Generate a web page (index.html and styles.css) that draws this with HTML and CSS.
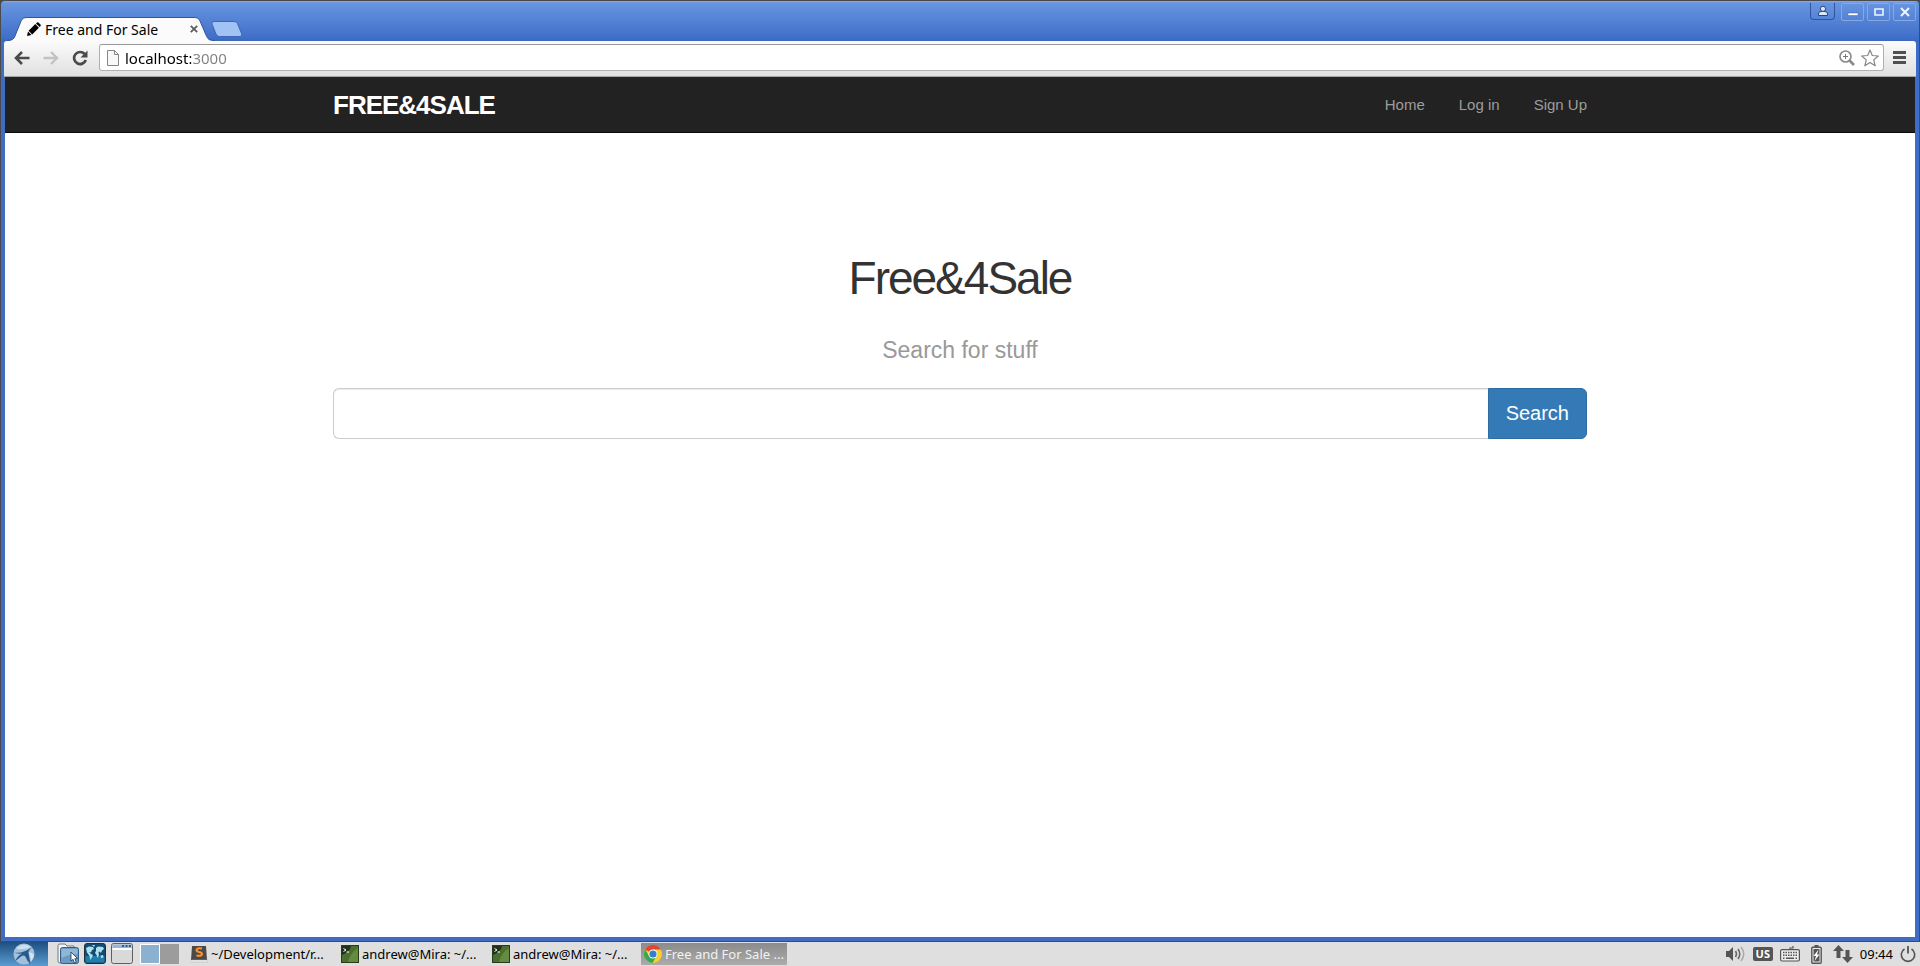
FILE: index.html
```html
<!DOCTYPE html>
<html lang="en">
<head>
  <meta charset="UTF-8">
  <meta name="viewport" content="width=device-width, initial-scale=1.0">
  <title>Free and For Sale</title>
  <link rel="stylesheet" href="styles.css">
</head>
<body>

  <div class="window">
    <div class="titlebar">
      <div class="tab">
        <svg class="tab-shape" viewBox="0 0 208 24" width="208" height="24">
          <path d="M0 24 C5 23.500 7 22 8 19 L14 4 C15 1.500 17 .5 20 .5 H187 C190 .5 192 1.500 193 4 L199 18 C201 22.500 202 23.500 208 23.500 V24Z" fill="#fbfbfb"/>
          <path d="M0 23.500 C5 23.500 7 22 8 19 L14 4 C15 1.500 17 .5 20 .5 H187 C190 .5 192 1.500 193 4 L199 18 C201 22.500 202 23.500 208 23.500" fill="none" stroke="#31569f"/>
        </svg>
        <svg class="favicon" viewBox="0 0 14 14" width="14" height="14"><path d="M0 14 L1 9.500 L4.500 13Z M1.600 8.800 L8.300 2.100 L11.900 5.700 L5.200 12.400Z M9 1.400 L10 .4 Q10.700 0 11.400 .5 L13.500 2.600 Q14 3.300 13.600 4 L12.600 5Z"/></svg>
        <span class="tab-title">Free and For Sale</span>
        <button class="tab-close" aria-label="Close tab"><svg viewBox="0 0 8 8" width="8" height="8"><path d="M.8 .8 L7.200 7.200 M7.200 .8 L.8 7.200" stroke="#5c5c5c" stroke-width="1.800"/></svg></button>
      </div>
      <button class="new-tab" aria-label="New tab"><svg viewBox="0 0 32 16" width="32" height="16"><path d="M3 .5 H23 Q25.500 .5 26.500 2.500 L30.500 12.500 Q31.500 15.500 29 15.500 H8.500 Q6 15.500 5 13 L1 3 Q0 .5 3 .5Z" fill="#a0c3f4" stroke="#3e66b4"/></svg></button>
      <div class="window-buttons">
        <button class="profile" aria-label="Profile"><svg viewBox="0 0 12 12" width="12" height="12"><path d="M1.500 10.500 V9 Q1.500 6.500 4 6.500 H8 Q10.500 6.500 10.500 9 V10.500Z" fill="#dce8fa" stroke="#27457f"/><circle cx="6" cy="3.800" r="2.600" fill="#dce8fa" stroke="#27457f"/></svg></button>
        <button aria-label="Minimize"><svg viewBox="0 0 12 10" width="12" height="10"><path d="M1 6 H11 V8.500 H1Z" fill="#fff" stroke="#3a62ad" stroke-width=".5"/></svg></button>
        <button aria-label="Maximize"><svg viewBox="0 0 12 10" width="12" height="10"><path d="M2 2 H10 V8 H2Z" fill="none" stroke="#eef4ff" stroke-width="1.600"/></svg></button>
        <button aria-label="Close"><svg viewBox="0 0 12 10" width="12" height="10"><path d="M2 1 L10 9 M10 1 L2 9" stroke="#eef4ff" stroke-width="2"/></svg></button>
      </div>
    </div>

    <div class="toolbar">
      <button class="tool" aria-label="Back"><svg viewBox="0 0 16 14" width="16" height="14"><path d="M8 1 L2 7 L8 13 M2 7 H15.500" fill="none" stroke="#4a4a4a" stroke-width="2.600"/></svg></button>
      <button class="tool" aria-label="Forward"><svg viewBox="0 0 16 14" width="16" height="14"><path d="M8 1 L14 7 L8 13 M14 7 H.5" fill="none" stroke="#c2c2c2" stroke-width="2.400"/></svg></button>
      <button class="tool" aria-label="Reload"><svg viewBox="0 0 16 16" width="16" height="16"><path d="M12.600 4 A6 6 0 1 0 13.800 10" fill="none" stroke="#4a4a4a" stroke-width="2.700"/><path d="M15.500 .5 V7.500 H8.500Z" fill="#4a4a4a"/></svg></button>
      <div class="omnibox">
        <svg viewBox="0 0 12 16" width="12" height="16"><path d="M.5 .5 H7.500 L11.500 4.500 V15.500 H.5Z M7.500 .5 V4.500 H11.500" fill="#f8f8f8" stroke="#868686"/></svg>
        <input type="text" class="address" value="localhost:3000" aria-label="Address">
        <button aria-label="Zoom"><svg viewBox="0 0 16 16" width="16" height="16"><circle cx="6.500" cy="6.500" r="5.500" fill="none" stroke="#8a8a8a" stroke-width="1.600"/><path d="M10.500 10.500 L15 15" stroke="#8a8a8a" stroke-width="2.600"/><path d="M4 6.500 H9 M6.500 4 V9" stroke="#777"/></svg></button>
        <button aria-label="Bookmark this page"><svg viewBox="0 0 18 18" width="18" height="18"><path d="M9 1 L11.300 6.500 L17.300 7 L12.700 10.900 L14.200 16.800 L9 13.600 L3.800 16.800 L5.300 10.900 L.7 7 L6.700 6.500Z" fill="#fff" stroke="#858585" stroke-width="1.200" stroke-linejoin="round"/></svg></button>
      </div>
      <button class="menu" aria-label="Menu"><svg viewBox="0 0 13 13" width="13" height="13"><path d="M0 1.500 H13 M0 6.500 H13 M0 11.500 H13" stroke="#505050" stroke-width="2.800"/></svg></button>
    </div>

    <div class="page">
      <header class="navbar">
        <div class="container">
          <a href="#" class="logo">FREE&amp;4SALE</a>
          <nav>
            <a href="#">Home</a>
            <a href="#">Log in</a>
            <a href="#">Sign Up</a>
          </nav>
        </div>
      </header>
      <main class="container center">
        <h1>Free&amp;4Sale</h1>
        <h2><label for="search">Search for stuff</label></h2>
        <form class="search">
          <input type="text" id="search">
          <button type="submit">Search</button>
        </form>
      </main>
    </div>
  </div>

  <div class="taskbar">
    <button class="start" aria-label="Menu"><svg viewBox="0 0 22 22" width="22" height="22"><circle cx="11" cy="11" r="10.500" fill="#a3bfd9"/><path d="M3.500 5 Q10 -1 18 4 Q12 7 4 6Z" fill="#cfdfec"/><path d="M1 9.500 Q10 11 19 4 Q15 8 15.500 10 L17.500 21 Q14 18 12 13 Q10 12 8 13.500 L2.500 18 Q4 13 9 10.500 Q4 11 1 9.500Z" fill="#235b8f"/><path d="M16 9 Q20 10 21 12 Q20 16 18 18Z" fill="#d6e4f0"/></svg></button>
    <div class="launchers">
      <button aria-label="File manager"><svg viewBox="0 0 22 22" width="22" height="22"><path d="M1 2.500 Q1 1 3 1 H8 L10 3 H17 V20 H3 Q1 20 1 18Z" fill="#f4f4f4" stroke="#777"/><rect x="3.500" y="4.500" width="18" height="16" rx="2" fill="#689cc8" stroke="#345f87"/><path d="M4.500 6 H20.500 V11 Q12 11 4.500 15Z" fill="#8fb7d8"/><path d="M14 9 V18 L16 16.300 L17.500 20 L19.300 19.200 L17.800 15.800 L20.500 15.500Z" fill="#fff" stroke="#333" stroke-width=".8"/></svg></button>
      <button aria-label="Web browser"><svg viewBox="0 0 22 22" width="22" height="22"><rect x=".5" y=".5" width="21" height="20" rx="2.500" fill="#164a70" stroke="#1e3140"/><path d="M1.500 13 H20.500 V19.500 H1.500Z" fill="#217da9"/><path d="M2 5 L5 3.500 L9 4 L10 6 L8 7 L7 9.500 L5 9 L7 11 L9 12 L8 14 L6.500 17 L5.500 13 L3 9.500Z M8 2 L11 2 L10 4Z M12 5 L14 3.500 L19 4 L20 6 L18 7.500 L17 10 L15.500 8.500 L14.500 9 L15 12 L13.500 15 L12.500 12 L11 10 L12 8Z M16.500 12.500 L19 12 L19.500 14.500 L17 15Z" fill="#ace2ee"/></svg></button>
      <button aria-label="Show desktop"><svg viewBox="0 0 22 22" width="22" height="22"><rect x=".5" y=".5" width="21" height="20" rx="2" fill="#d9d9d9" stroke="#606060"/><path d="M1.500 1.500 H20.500 V5 H1.500Z" fill="#9bb7d0"/><path d="M11 3 H13 M14.500 3 H16.500 M18 3 H20" stroke="#245d91" stroke-width="2"/><path d="M1.500 6 H20.500" stroke="#fff" stroke-width="2"/></svg></button>
    </div>
    <div class="pager">
      <button class="current" aria-label="Desktop 1"></button>
      <button aria-label="Desktop 2"></button>
    </div>
    <div class="tasks">
      <button><svg viewBox="0 0 18 18" width="18" height="18"><path d="M1 15 L2 1 H16 L17 15Z" fill="#4a4a4a"/><path d="M0 15 H18 V17 H0Z" fill="#f4f4f4" stroke="#aaa" stroke-width=".5"/><path d="M12 3.500 Q7 2.500 6.500 5 Q6.500 6.500 9 7 Q12 7.500 12 9 Q11.500 11.500 6.500 10.500" fill="none" stroke="#ff922b" stroke-width="2"/></svg><span>~/Development/r...</span></button>
      <button><svg viewBox="0 0 18 18" width="18" height="18"><use href="#terminal"/></svg><span>andrew@Mira: ~/...</span></button>
      <button><svg viewBox="0 0 18 18" width="18" height="18"><use href="#terminal"/></svg><span>andrew@Mira: ~/...</span></button>
      <button class="active"><svg viewBox="0 0 18 18" width="18" height="18"><circle cx="9" cy="9" r="9" fill="#f7ce2e"/><path d="M9 9 L1.200 4.500 A9 9 0 0 1 16.800 4.500 H9Z" fill="#df4636"/><path d="M1.200 4.500 A9 9 0 0 0 8.500 18 L12.500 11 L5 11Z" fill="#35a853"/><circle cx="9" cy="9" r="4.500" fill="#fff"/><circle cx="9" cy="9" r="3.600" fill="#347ecb"/></svg><span>Free and For Sale ...</span></button>
    </div>
    <div class="tray">
      <svg viewBox="0 0 20 18" width="20" height="18"><path d="M0 6 H3 L7 2 V16 L3 12 H0Z" fill="#555"/><path d="M9.500 6 Q11.500 9 9.500 12 M12 4 Q15.500 9 12 14" fill="none" stroke="#666" stroke-width="1.500"/><path d="M15 2 Q20.500 9 15 16" fill="none" stroke="#aaa" stroke-width="1.500"/></svg>
      <span class="lang">US</span>
      <svg viewBox="0 0 20 16" width="20" height="16"><path d="M10 3.500 V2 H13 V0" fill="none" stroke="#555" stroke-width="1.200"/><rect x=".6" y="3.600" width="18.800" height="11.400" rx="1.500" fill="#eee" stroke="#555" stroke-width="1.200"/><path d="M3 6.500 H17.500 M3 9.200 H17.500" stroke="#555" stroke-width="1.600" stroke-dasharray="1.500 1"/><path d="M3 12.300 H4.500 M6 12.300 H14 M15.500 12.300 H17" stroke="#555" stroke-width="1.400"/></svg>
      <svg class="battery" viewBox="0 0 11 19" width="11" height="19"><path d="M3.500 0 H7.500 V3 H3.500Z" fill="#555"/><rect x=".8" y="2.300" width="9.400" height="16" rx="1" fill="#eee" stroke="#555" stroke-width="1.400"/><path d="M2.500 4 H8.500 V16.500 H2.500Z" fill="#555"/><path d="M7.500 4.500 L2.500 11 H5 L3.500 16 L8.500 9.500 H6Z" fill="#fff"/></svg>
      <svg viewBox="0 0 20 18" width="20" height="18"><path d="M5.500 0 L11 6 H7.500 V13 H3.500 V6 H0Z M14.500 18 L9 12 H12.500 V5 H16.500 V12 H20Z" fill="#555"/></svg>
      <span class="clock">09:44</span>
      <button aria-label="Log out"><svg viewBox="0 0 16 18" width="16" height="18"><path d="M4.500 4 A6.700 6.700 0 1 0 11.500 4" fill="none" stroke="#555" stroke-width="1.600"/><path d="M8 1 V8.500" stroke="#555" stroke-width="1.800"/></svg></button>
    </div>
  </div>

  <svg class="symbols" aria-hidden="true">
    <symbol id="terminal" viewBox="0 0 18 18"><rect x=".5" y=".5" width="17" height="17" fill="#4a6e2e" stroke="#293b1c"/><path d="M1 1 H10 Q9 7 1 10Z" fill="#20301a"/><path d="M7 17 Q9 8 17 3 V17Z" fill="#648b3f"/><path d="M2.500 3.500 L5 5 L2.500 6.500 M5.500 7 H8" stroke="#fff" fill="none"/></symbol>
  </svg>

</body>
</html>
```
FILE: styles.css
```css
* {
  box-sizing: border-box;
}

body {
  margin: 0;
  height: 100vh;
  display: flex;
  flex-direction: column;
  font-family: "Noto Sans", sans-serif;
  font-size: 14px;
  background-color: #4a4a4a;
  overflow: hidden;
}

svg {
  display: block;
  flex: none;
}

button {
  padding: 0;
  border: 0;
  background: none;
  font-family: inherit;
  cursor: pointer;
}

.symbols {
  position: absolute;
  width: 0;
  height: 0;
}

/* browser window */
.window {
  flex: 1;
  min-height: 0;
  display: flex;
  flex-direction: column;
  margin: 1px 1px;
  padding: 0 3px 4px;
  border-radius: 4px 4px 0 0;
  background-color: #3f6dc5;
}

.titlebar {
  height: 40px;
  display: flex;
  align-items: flex-end;
  margin: 0 -3px;
  padding-left: 6px;
  border-radius: 4px 4px 0 0;
  background: linear-gradient(#87acea 0, #6795e0 2px, #4170ca 36px, #3c69bd);
}

.tab {
  position: relative;
  width: 208px;
  height: 24px;
  display: flex;
  align-items: center;
  padding: 0 17px 0 20px;
}

.tab-shape {
  position: absolute;
  left: 0;
  top: 0;
}

.favicon,
.tab-title,
.tab-close {
  position: relative;
}

.tab-title {
  flex: 1;
  margin-left: 4px;
  white-space: nowrap;
}

.new-tab {
  align-self: flex-end;
  margin: 0 0 4px -4px;
}

.window-buttons {
  align-self: flex-start;
  display: flex;
  gap: 3px;
  margin: 2px 3px 0 auto;
}

.window-buttons button {
  width: 23px;
  height: 18px;
  display: flex;
  align-items: center;
  justify-content: center;
  border: 1px solid #86a9e6;
  border-radius: 2px;
}

.window-buttons .profile {
  width: 25px;
  height: 17px;
  margin-right: 3px;
  border-color: #2f549b;
  border-top: 0;
  border-radius: 0 0 4px 4px;
}

.toolbar {
  height: 36px;
  display: flex;
  align-items: center;
  padding: 0 8px 2px 10px;
  border-bottom: 1px solid #a5a5a5;
  border-radius: 3px 3px 0 0;
  background: linear-gradient(#fbfbfb, #e0e0e0);
}

.tool {
  width: 16px;
  margin-right: 13px;
}

.tool:nth-child(3) {
  margin-right: 11px;
}

.omnibox {
  flex: 1;
  height: 27px;
  display: flex;
  align-items: center;
  gap: 6px;
  padding: 0 4px 0 7px;
  border: 1px solid #b0b0b0;
  border-top-color: #999;
  border-radius: 3px;
  background-color: #fff;
}

/* host in black, port in grey */
.address {
  flex: 1;
  min-width: 0;
  padding: 0;
  border: 0;
  outline: 0;
  font-family: inherit;
  font-size: 15px;
  color: transparent;
  background: linear-gradient(to right, #000 66px, #808080 66px);
  -webkit-background-clip: text;
  background-clip: text;
}

.menu {
  margin-left: 9px;
  padding-right: 2px;
}

/* web page */
.page {
  flex: 1;
  min-height: 0;
  margin: 0 1px;
  background-color: #fff;
  font-family: "Liberation Sans", Arial, sans-serif;
}

.container {
  max-width: 1254px;
  margin: 0 auto;
}

.navbar {
  background-color: #222;
  border-bottom: 1px solid #080808;
}

.navbar .container {
  height: 55px;
  display: flex;
  align-items: center;
  justify-content: space-between;
}

.logo {
  padding-top: 2px;
  color: #fff;
  font-size: 26px;
  font-weight: bold;
  letter-spacing: -1px;
  text-decoration: none;
}

nav {
  display: flex;
  gap: 34px;
}

nav a {
  color: #9d9d9d;
  font-size: 15px;
  text-decoration: none;
}

.center {
  padding-top: 120px;
  text-align: center;
}

h1 {
  margin: 0 0 33px;
  color: #333;
  font-size: 46px;
  font-weight: normal;
  line-height: 50px;
  letter-spacing: -2px;
}

h2 {
  margin: 0 0 24px;
  color: #999;
  font-size: 23px;
  font-weight: normal;
  line-height: 28px;
}

.search {
  display: flex;
}

.search input {
  flex: 1;
  min-width: 0;
  height: 51px;
  padding: 11px 18px;
  border: 1px solid #ccc;
  border-right: 0;
  border-radius: 6px 0 0 6px;
  box-shadow: inset 0 1px 1px rgba(0, 0, 0, 0.08);
  font-family: inherit;
  font-size: 20px;
}

.search button {
  padding: 0 17px;
  border: 1px solid #2e6da4;
  border-radius: 0 6px 6px 0;
  background-color: #337ab7;
  color: #fff;
  font-size: 20px;
}

/* desktop panel */
.taskbar {
  height: 24px;
  display: flex;
  align-items: center;
  background-color: #dfdfdf;
  font-size: 13px;
  overflow: hidden;
}

.start {
  width: 48px;
  height: 24px;
  display: flex;
  align-items: center;
  justify-content: center;
  background: linear-gradient(#1d4f80, #5b9bd0);
}

.launchers {
  display: flex;
  gap: 5px;
  margin-left: 9px;
}

.pager {
  display: flex;
  margin-left: 7px;
}

.pager button {
  width: 19px;
  height: 20px;
  background-color: #9c9c9c;
}

.pager .current {
  width: 20px;
  border: 1px solid #fff;
  background-color: #8cb0d0;
}

.tasks {
  display: flex;
  gap: 5px;
  margin-left: 9px;
}

.tasks button {
  width: 146px;
  height: 22px;
  display: flex;
  align-items: center;
  gap: 3px;
  padding: 0 2px;
  font-size: 13px;
  white-space: nowrap;
  overflow: hidden;
}

.tasks .active {
  padding-left: 3px;
  background: linear-gradient(#8b8b8b, #ababab);
  color: #f2f2f2;
}

.tray {
  display: flex;
  align-items: center;
  gap: 7px;
  margin-left: auto;
  padding-right: 4px;
}

.lang {
  width: 20px;
  height: 14px;
  border-radius: 2px;
  background-color: #555;
  color: #fff;
  font-size: 11px;
  font-weight: bold;
  line-height: 14px;
  text-align: center;
}

.battery {
  margin: 0 4px;
}
```
